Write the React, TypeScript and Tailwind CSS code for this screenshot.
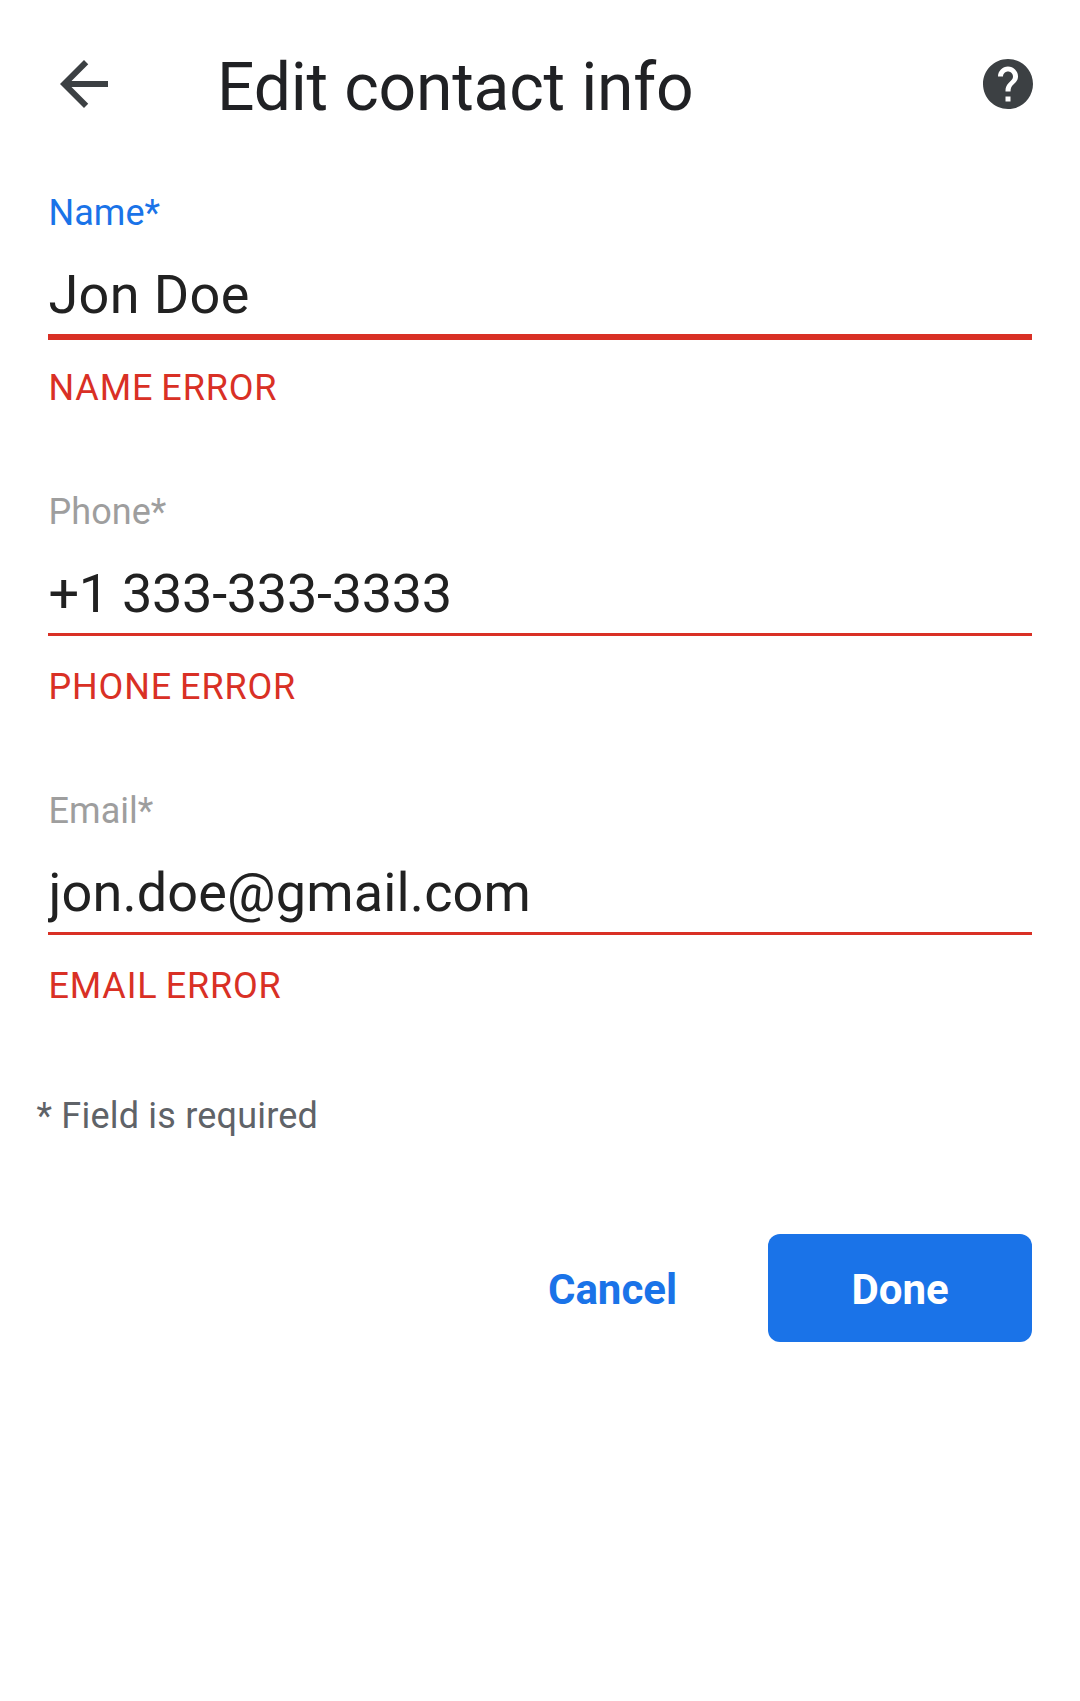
import React from 'react';

type FieldProps = { label: string; value: string; error: string; tracking: string; active?: boolean };

function Field({ label, value, error, tracking, active }: FieldProps) {
  return (
    <div className="h-[299px]">
      <div className={`h-[43px] pl-[0.5px] text-[36px] leading-[45px] tracking-[0.05px] ${active ? 'text-[#1a73e8]' : 'text-[#9e9e9e]'}`}>{label}</div>
      <div className={`mt-[29px] box-content h-[71px] overflow-hidden pl-[0.4px] text-[54px] leading-[64px] text-[#212121] border-[#d93025] ${tracking} ${active ? 'border-b-[6px]' : 'border-b-[3px]'}`}>{value}</div>
      <div className={`pl-[0.5px] text-[36px] leading-[45px] tracking-[0.83px] [word-spacing:-1.6px] text-[#d93025] ${active ? 'mt-[26px]' : 'mt-[29px]'}`}>{error}</div>
    </div>
  );
}

export default function App() {
  return (
    <main className="h-[1701px] w-[1080px] overflow-hidden bg-white font-['Roboto',sans-serif]">
      <header className="flex h-[168px] items-center pl-12 pr-[42px]">
        <svg className="size-[72px]" viewBox="0 0 24 24" fill="#3c4043"><path d="M20 11H7.83l5.59-5.59L12 4l-8 8 8 8 1.41-1.41L7.83 13H20v-2z" /></svg>
        <h1 className="ml-[97px] flex-1 pt-[6px] text-[66px] leading-[77px] tracking-[-0.2px] text-[#202124]">Edit contact info</h1>
        <svg className="size-[60px]" viewBox="0 0 24 24" fill="#3c4043"><path d="M12 2C6.48 2 2 6.48 2 12s4.48 10 10 10 10-4.48 10-10S17.52 2 12 2zm1 17h-2v-2h2v2zm2.07-7.75l-.9.92C13.45 12.9 13 13.5 13 15h-2v-.5c0-1.1.45-2.1 1.17-2.83l1.24-1.26c.37-.36.59-.86.59-1.41 0-1.1-.9-2-2-2s-2 .9-2 2H8c0-2.21 1.79-4 4-4s4 1.79 4 4c0 .88-.36 1.68-.93 2.25z" /></svg>
      </header>
      <div className="px-12 pt-[23px]">
        <Field label="Name*" value="Jon Doe" error="NAME ERROR" tracking="tracking-[0.37px]" active />
        <Field label="Phone*" value="+1 333-333-3333" error="PHONE ERROR" tracking="tracking-[-0.28px]" />
        <Field label="Email*" value="jon.doe@gmail.com" error="EMAIL ERROR" tracking="tracking-[0.15px]" />
      </div>
      <p className="mt-[6px] h-[43px] pl-[36.5px] text-[36px] leading-[45px] tracking-[0.2px] text-[#5f6368]">* Field is required</p>
      <div className="mt-[97px] flex justify-end pr-12 text-[42px] font-bold">
        <button className="h-[108px] w-[264px] pl-px pt-[2px] text-[#1a73e8]">Cancel</button>
        <button className="ml-6 h-[108px] w-[264px] rounded-xl bg-[#1a73e8] pt-[2px] text-white">Done</button>
      </div>
    </main>
  );
}
